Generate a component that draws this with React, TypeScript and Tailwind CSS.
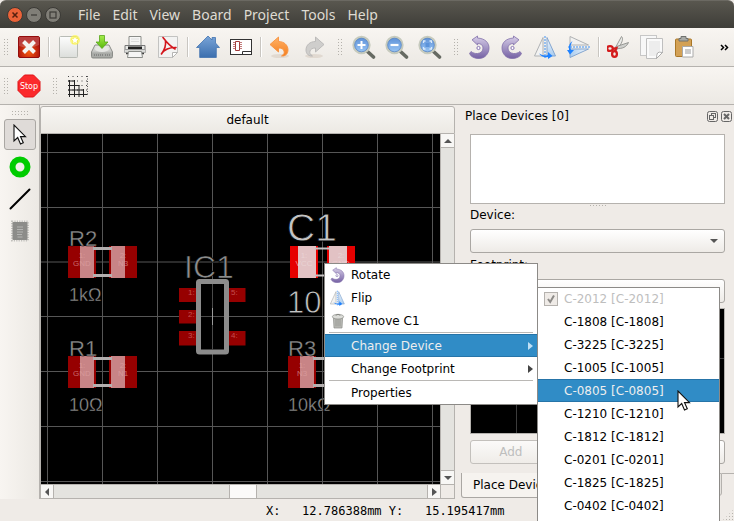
import type { ReactNode } from 'react';

const uiFont = "font-['DejaVu_Sans',sans-serif]";
const menus = ['File', 'Edit', 'View', 'Board', 'Project', 'Tools', 'Help'];
const devices = ['2012', '1808', '3225', '1005', '0805', '1210', '1812', '0201', '1825', '0402'];

function Svg({ children, size = 24 }: { children: ReactNode; size?: number }) {
  return (
    <svg width={size} height={size} viewBox="0 0 24 24" fill="none" aria-hidden="true" className="shrink-0">
      {children}
    </svg>
  );
}

function Gradients() {
  const list: [string, string, string][] = [
    ['gPaper', '#fdfdfd', '#dcdedb'],
    ['gBlue', '#7aa5d8', '#3c6fae'],
    ['gGreen', '#a5ee4c', '#58b80c'],
    ['gMetal', '#eeeeec', '#9a9c98'],
    ['gLens', '#5c8fd6', '#9cc8f6'],
    ['gPurple', '#d8cfe8', '#7561a4'],
    ['gOrange', '#ffb267', '#f57f1f'],
    ['gFlip', '#f2f7fc', '#a9ccef'],
  ];
  return (
    <svg width="0" height="0" className="absolute" aria-hidden="true">
      <defs>
        {list.map(([id, a, b]) => (
          <linearGradient key={id} id={id} x1="0" y1="0" x2="0" y2="1">
            <stop offset="0" stopColor={a} />
            <stop offset="1" stopColor={b} />
          </linearGradient>
        ))}
        <radialGradient id="gFire" cx="0.5" cy="0.75" r="0.6">
          <stop offset="0" stopColor="#f55a10" />
          <stop offset="1" stopColor="#a80d0d" />
        </radialGradient>
      </defs>
    </svg>
  );
}

const CloseBoard = () => (
  <Svg>
    <rect x="1.5" y="1.5" width="21" height="21" rx="1.5" fill="url(#gFire)" stroke="#930c0c" />
    <path d="M2 2h20v8Q12 15 2 11z" fill="#fff" opacity=".2" />
    <path d="M6.500 6.500l11 11m0-11l-11 11" stroke="#f4f4f2" strokeWidth="4" />
  </Svg>
);
const NewDoc = () => (
  <Svg>
    <rect x="2.500" y="1.500" width="18" height="21" rx="1" fill="url(#gPaper)" stroke="#b9bcb6" />
    <circle cx="18" cy="5" r="5" fill="#fff84a" opacity=".65" />
    <path d="M18 1l1.200 2.600 2.800.4-2 2 .5 2.800-2.500-1.300-2.500 1.300.5-2.800-2-2 2.800-.4z" fill="#fff" stroke="#f2ea35" strokeWidth=".6" />
  </Svg>
);
const Save = () => (
  <Svg>
    <path d="M5 10h14l3.500 7v4.500q0 1.500-1.500 1.500H3q-1.500 0-1.500-1.500V17z" fill="url(#gMetal)" stroke="#8a8c88" />
    <path d="M2 17.500h20V22H2z" fill="#a9aba7" />
    <ellipse cx="12" cy="14" rx="7" ry="3" fill="#e6e7e4" />
    <path d="M4 20h9M15 20h5" stroke="#666" strokeDasharray="1 1" />
    <path d="M9.500 .5h5V7h3.500l-6 6.500L6 7h3.500z" fill="url(#gGreen)" stroke="#57a51a" strokeWidth=".8" />
  </Svg>
);
const Print = () => (
  <Svg>
    <path d="M6 1.500h12V11H6z" fill="#f7f7f6" stroke="#8b8d89" />
    <path d="M2 10.500h20v4H2z" fill="#e7e8e5" stroke="#777" />
    <path d="M5 11.500h14v3H5z" fill="#222" />
    <path d="M1.500 14.500h21v3h-21z" fill="#d8d9d6" stroke="#999" strokeWidth=".7" />
    <path d="M3 18.500h18" stroke="#3b3b3b" strokeWidth="1.500" />
    <path d="M5.500 16.500h13l1 6h-15z" fill="#f5f5f4" stroke="#8b8d89" />
    <path d="M8 4h8M8 6.500h8" stroke="#ddd" />
  </Svg>
);
const Pdf = () => (
  <Svg>
    <path d="M2.500 1.500h19v16l-5 5h-14z" fill="#f3f3f2" stroke="#c3c3c1" />
    <path d="M21.500 17.500h-5v5z" fill="#fff" stroke="#b5b5b3" />
    <path d="M7 2.500c1.500 2 6 8 12 11.500M9.500 6c.5 4-1 9-4 13M5.500 18.500C9 14 14 12.300 20 12.500" stroke="#d3161c" strokeWidth="1.600" strokeLinecap="round" />
  </Svg>
);
const Home = () => (
  <Svg>
    <path d="M12 1l4 4V2.500h3.500V8l4 4.500h-3.200V22.500H3.700V12.500H.5z" fill="url(#gBlue)" stroke="#4374b0" strokeWidth=".8" strokeLinejoin="round" />
  </Svg>
);
const Schematic = () => (
  <Svg>
    <rect x="1.500" y="4.500" width="21" height="15" fill="#fff" stroke="#333" />
    <path d="M6.500 6.500h4v9h-4z" stroke="#a13a3a" />
    <path d="M4 7.500h2.500M4 9.500h2.500M4 11.500h2.500M4 13.500h2.500M10.500 7.500H13M10.500 9.500H13M10.500 11.500H13M10.500 13.500H13" stroke="#b35a5a" strokeWidth=".8" />
    <path d="M13.500 19.500v-3h9" stroke="#333" />
  </Svg>
);
const Undo = ({ redo = false }: { redo?: boolean }) => (
  <Svg>
    <g transform={redo ? 'matrix(-1 0 0 1 23 0)' : undefined}>
      <ellipse cx="11" cy="21" rx="9" ry="2" fill="#c9b7a6" opacity=".35" />
      <path d="M1 9.500L9.500 2v4.500C15 6.500 19 10 19 15c0 4-3 6.500-6.500 6 2.500-1.500 3-3 2.500-5-.5-1.800-2.500-3-5.500-3V17z" fill={redo ? '#cfcecc' : 'url(#gOrange)'} stroke={redo ? '#b8b7b5' : '#f79240'} strokeWidth=".9" />
    </g>
  </Svg>
);
const Zoom = ({ kind }: { kind: 'in' | 'out' | 'fit' }) => (
  <Svg>
    <path d="M15.500 16.500l6 5.500" stroke="#666a62" strokeWidth="3.600" strokeLinecap="round" />
    <circle cx="9.500" cy="10" r="8" fill="url(#gLens)" stroke="#c6cabd" strokeWidth="2.300" />
    <circle cx="9.500" cy="10" r="6.800" stroke="#4a7dc4" strokeWidth=".7" />
    {kind === 'in' && <path d="M5.500 10h8M9.500 6v8" stroke="#fff" strokeWidth="2" />}
    {kind === 'out' && <path d="M5.500 10h8" stroke="#fff" strokeWidth="2.200" />}
    {kind === 'fit' && <path d="M5.500 8V6h2M11.500 6h2v2M13.500 12v2h-2M7.500 14h-2v-2" stroke="#dcebfb" strokeWidth="1.300" />}
    {kind === 'fit' && <rect x="7.500" y="8" width="4" height="4" fill="#5c93da" />}
  </Svg>
);
const Rotate = ({ flip = false, size = 24 }: { flip?: boolean; size?: number }) => (
  <Svg size={size}>
    <g transform={flip ? 'matrix(-1 0 0 1 22 0)' : undefined}>
      <path d="M4 4.800L9.500 1v2c7.500.5 11.500 4.500 11.500 10S17 23.500 11 23.500C6.500 23.500 3 22 1.500 18.500L3 16.500c2 1.500 4 2.200 6.500 2 3.500-.3 5.500-2.500 5.500-5.500 0-2.800-2-4.500-5.500-4.500V10z" fill="url(#gPurple)" stroke="#8270aa" strokeWidth=".8" />
      <circle cx="10.500" cy="13" r="1.600" fill="#fff" stroke="#8774b3" />
    </g>
  </Svg>
);
const Flip = ({ vertical = false, size = 24 }: { vertical?: boolean; size?: number }) => (
  <Svg size={size}>
    <g transform={vertical ? 'matrix(0 1 -1 0 24 0)' : 'translate(-1 0)'}>
      <path d="M10 2.500V21H1.500z" fill="#f2f2f1" stroke="#b0b2b4" />
      <path d="M14 2.500V21h8.500z" fill="url(#gFlip)" stroke="#85a6cf" />
      <path d="M12 1v22" stroke="#3c91f5" strokeDasharray="2 1" />
      <path d="M6 18.500q5 3 9 1.500v-3l4.500 4-4.500 3v-2q-6 1-9-3.500z" fill="#1f82ff" />
    </g>
  </Svg>
);
const Cut = () => (
  <Svg>
    <g transform="translate(-1 0)">
      <path d="M15.500 1.500c2 2 1 5-2.500 11l-3 3-1-2z" fill="#e9eae7" stroke="#858783" strokeWidth=".8" />
      <path d="M22.500 7.500c-2 4.500-6 6.500-12.500 6l-1.500-.5 2-1.500z" fill="#cfd0cd" stroke="#858783" strokeWidth=".8" />
      <ellipse cx="4" cy="13.500" rx="2.800" ry="2.400" stroke="#d41c1c" strokeWidth="2.300" />
      <ellipse cx="8.500" cy="19" rx="2.400" ry="2.800" stroke="#d41c1c" strokeWidth="2.300" />
      <path d="M6.500 14l4-1-1.500 3.500" stroke="#d41c1c" strokeWidth="2" />
    </g>
  </Svg>
);
const Copy = () => (
  <Svg>
    <rect x=".5" y=".5" width="16" height="20" fill="#f8f8f8" stroke="#c7c7c7" />
    <path d="M6.500 3.500h16v14l-6 6h-10z" fill="#fafafa" stroke="#bfbfbf" />
    <path d="M9 6h11v10l-5 5H9z" fill="#ededed" />
    <path d="M22.500 17.500q-4-1-5 .5t-1 5.500z" fill="#fff" stroke="#9b9b9b" strokeWidth=".8" />
  </Svg>
);
const Paste = () => (
  <Svg>
    <rect x="2.500" y="4" width="16" height="17.500" rx="1" fill="#d3a155" stroke="#a97727" />
    <path d="M6 6V3.500h2V1.500h5v2h2V6z" fill="#a9aba7" stroke="#70726f" />
    <path d="M9.500 11.500h10.500V22H9.500z" fill="#fff" stroke="#aaa" />
    <path d="M12 14h6v5h-6z" fill="#ccc" />
  </Svg>
);
const Stop = () => (
  <Svg>
    <path d="M7.500 1h9L23 7.500v9L16.500 23h-9L1 16.500v-9z" fill="#fb2a2c" stroke="#e01216" />
    <text x="12" y="15" textAnchor="middle" fontSize="8" fill="#fff" fontFamily="DejaVu Sans, sans-serif">Stop</text>
  </Svg>
);
const Grid = () => (
  <Svg>
    <path d="M1 2.500h22M1 7h22M1 11.500h22M1 16h22M1 20.500h22" stroke="#444" strokeDasharray="1 3.500" />
    <path d="M2.500 6v17M7.500 6v17M12 11v12M16.500 15v8M1 7h6.500M1 11.500h11.500M1 16h16M1 20.500h19.500" stroke="#222" />
    <path d="M20.500 2v20" stroke="#555" strokeDasharray="1 1.500" />
  </Svg>
);
const Trash = () => (
  <Svg size={16}>
    <path d="M5 6h14l-1 16.500H6z" fill="#b9bab5" stroke="#8b8d88" />
    <path d="M9 9v11M12 9v11M15 9v11" stroke="#93958f" strokeWidth="1.200" />
    <ellipse cx="12" cy="5.500" rx="8.500" ry="3.500" fill="#dcddd9" stroke="#8b8d88" />
    <path d="M8.500 3.500q3.500-3 7 0" stroke="#858782" strokeWidth="1.500" />
  </Svg>
);
const Chip = () => (
  <Svg>
    <rect x="4" y="2.500" width="16" height="19" stroke="#c2c1bd" strokeWidth="2" strokeDasharray="1.200 1.200" />
    <rect x="4.500" y="3" width="15" height="18" rx="1" fill="#8c8c89" />
    <path d="M9 8h6M9 10.500h6M9 13h6M9 15.500h5M9.500 18h5" stroke="#bfbfbc" strokeWidth=".8" />
  </Svg>
);
const Pointer = ({ className = '' }: { className?: string }) => (
  <svg width="14" height="22" viewBox="0 0 14 22" className={className} aria-hidden="true">
    <path d="M1 1v16l3.700-3.500L7.500 20l2.800-1.200L7.500 12.600h5z" fill="#fff" stroke="#111" strokeWidth="1.100" />
  </svg>
);

function Tool({ label, children }: { label: string; children: ReactNode }) {
  return (
    <button type="button" aria-label={label} title={label} className="flex h-8 w-[33px] shrink-0 items-center justify-center">
      {children}
    </button>
  );
}
const Separator = () => (
  <div className="flex w-[7px] shrink-0 justify-center">
    <div className="h-5 w-0.5 border-l border-[#c9c6c1] bg-white" />
  </div>
);
const dots = 'bg-[radial-gradient(circle,#b5b2ac_1px,transparent_1px)] bg-[size:3px_3px]';
const Handle = ({ first = false }: { first?: boolean }) => (
  <div className={`flex shrink-0 justify-end ${first ? 'w-3 pr-[3px]' : 'w-[17px] pr-1'}`}>
    <div className={`h-[18px] w-1.5 ${dots}`} />
  </div>
);

function Arrow({ dir, className = 'fill-[#555]' }: { dir: 'up' | 'down' | 'left' | 'right'; className?: string }) {
  const d = { up: 'M0 6h8L4 2z', down: 'M0 2h8L4 6z', left: 'M6 0v8L2 4z', right: 'M2 0v8l5-4z' }[dir];
  return (
    <svg width="8" height="8" viewBox="0 0 8 8" className={className} aria-hidden="true">
      <path d={d} />
    </svg>
  );
}

function Part({ x, y, net1, net2, bright = false }: { x: number; y: number; net1: string; net2: string; bright?: boolean }) {
  const pad = bright ? '#e60000' : '#960000';
  const light = bright ? '#e2c2c4' : '#c88486';
  const w = bright ? 65 : 69;
  const inset = bright ? 8 : 12;
  const ink = bright ? '#eedcdc' : '#e0a4a5';
  return (
    <g transform={`translate(${x} ${y})`} fontSize="8" textAnchor="middle">
      <path d={`M0 0h28v32H0zM${w - 28} 0h28v32h-28z`} fill={pad} />
      <path d={`M${inset} 0h${26 - inset}v32h-${26 - inset}zM${w - 26} 0h${26 - inset}v32h-${26 - inset}z`} fill={light} />
      <path d={`M25 2.500h${w - 50}M25 29.500h${w - 50}`} stroke={bright ? '#c8c4c4' : '#b4b0b0'} strokeWidth={bright ? 2 : 3} />
      <path d={`M${w / 2} 8v16`} stroke="#555" strokeWidth="1" />
      <g fill={ink} opacity=".65">
        <text x="14" y="12">1:</text>
        <text x="14" y="20">{net1}</text>
        <text x={w - 14} y="12">2:</text>
        <text x={w - 14} y="20">{net2}</text>
      </g>
    </g>
  );
}

function BoardView() {
  const xs = [47.5, 102.5, 157.5, 212.5, 267.5, 322.5, 377.5, 432.5];
  const ys = [152.5, 207.5, 262, 316.5, 371.5, 426.5, 481.5];
  return (
    <svg viewBox="41 134 399 350" preserveAspectRatio="xMinYMin slice" className="h-full min-w-0 flex-1 bg-black font-['Liberation_Sans',Arial,sans-serif]" role="img" aria-label="Board layout">
      {xs.map((x) => <path key={x} d={`M${x} 134V484`} stroke="#565656" />)}
      {ys.map((y) => <path key={y} d={`M41 ${y}H440`} stroke="#565656" />)}
      <Part x={68} y={246} net1="GND" net2="N3" />
      <Part x={68} y={356} net1="GND" net2="N1" />
      <Part x={288} y={356} net1="N3" net2="" />
      <Part x={290} y={246} net1="VCC" net2="GND" bright />
      <path d="M179 288h23v14h-23zM223 288h22.500v14H223zM179 310h23v13.500h-23zM179 331h23v14.500h-23zM223 331h22.500v14.500H223z" fill="#960000" />
      <rect x="198.500" y="281.500" width="28" height="70.500" fill="#000" stroke="#8c8c8c" strokeWidth="5" rx="1" />
      <path d="M212.500 284v65.500M201 316.500h23" stroke="#4a4a4a" />
      <path d="M212.500 308v17" stroke="#999" />
      <g fontSize="8" fill="#d06060" opacity=".8">
        <text x="188" y="295">1:</text>
        <text x="188" y="317">2:</text>
        <text x="188" y="338">3:</text>
        <text x="231" y="295">5:</text>
        <text x="231" y="338">4:</text>
      </g>
      <g fill="#8c8c8c" stroke="#000" strokeWidth=".3">
        <text x="69" y="246" fontSize="22">R2</text>
        <text x="69" y="301" fontSize="18">1kΩ</text>
        <text x="69" y="356" fontSize="22">R1</text>
        <text x="69" y="411" fontSize="18">10Ω</text>
        <text x="184" y="278" fontSize="32" strokeWidth=".7">IC1</text>
        <text x="288" y="356" fontSize="22">R3</text>
        <text x="288" y="411" fontSize="18">10kΩ</text>
      </g>
      <g fill="#c4c4c4" stroke="#000" strokeWidth=".8">
        <text x="287" y="241" fontSize="39">C1</text>
        <text x="287" y="313" fontSize="31">10</text>
      </g>
    </svg>
  );
}

function SelectBox({ id, label }: { id: string; label: string }) {
  return (
    <div className="flex flex-col">
      <label htmlFor={id} className="flex h-[22px] items-center">{label}</label>
      <div className="mt-[3px] grid items-center">
        <select id={id} className="col-start-1 row-start-1 h-6 w-full appearance-none rounded-[3px] border border-[#aaa7a3] bg-linear-to-b from-white to-[#eeebe7]" />
        <span className="pointer-events-none col-start-1 row-start-1 justify-self-end pr-[7px]"><Arrow dir="down" /></span>
      </div>
    </div>
  );
}

function PlaceDevices() {
  return (
    <aside className="flex w-[279px] shrink-0 flex-col overflow-hidden pl-1.5">
      <header className="flex h-[22px] shrink-0 items-center gap-[3px] pr-0.5 pl-1">
        <h2 className="flex-1">Place Devices [0]</h2>
        <button type="button" aria-label="Float panel">
          <svg width="11" height="11" viewBox="0 0 11 11" fill="none" stroke="#666" aria-hidden="true">
            <rect x=".5" y=".5" width="10" height="10" rx="2" />
            <rect x="4.500" y="2.500" width="4" height="4" />
            <rect x="2.500" y="4.500" width="4" height="4" fill="#efebe7" />
          </svg>
        </button>
        <button type="button" aria-label="Close panel">
          <svg width="11" height="11" viewBox="0 0 11 11" fill="none" stroke="#666" aria-hidden="true">
            <rect x=".5" y=".5" width="10" height="10" rx="2" />
            <path d="M3 3l5 5m0-5L3 8" strokeWidth="2" />
          </svg>
        </button>
      </header>
      <div className="flex min-h-0 flex-1 flex-col pt-[7px] pr-[9px] pl-[9px]">
        <div role="listbox" aria-label="Devices to place" className="h-[70px] shrink-0 border border-[#b5b2ae] bg-white" />
        <div className={`h-[3px] w-[18px] self-center ${dots}`} />
        <div className="-mt-[3px] flex flex-col gap-px">
          <SelectBox id="device" label="Device:" />
          <SelectBox id="footprint" label="Footprint:" />
        </div>
        <svg className="mt-[5px] min-h-0 w-full flex-1 border border-[#b5b2ae] bg-black" role="img" aria-label="Footprint preview">
          <path d="M45.500 0V130M100.500 0V130M155.500 0V130M210.500 0V130M0 49.500H260" stroke="#3c3c3c" />
        </svg>
        <div className="mt-1.5 mb-[9px] flex shrink-0 gap-1.5">
          <button type="button" disabled className="h-6 flex-1 rounded-[3px] border border-[#c3c0bc] bg-linear-to-b from-[#fbfaf9] to-[#efece8] pr-1.5 text-[#bebebe]">Add</button>
          <span className="flex h-6 flex-2 rounded-[3px] border border-[#aaa7a3] bg-linear-to-b from-white to-[#eeebe7]" />
        </div>
      </div>
      <div role="tablist" className="flex h-[26px] shrink-0 items-start">
        <button type="button" role="tab" aria-selected="true" className="h-[25px] shrink-0 rounded-b-[3px] border border-t-0 border-[#aaa7a3] bg-[#f6f3ef] px-[11px]">Place Devices</button>
        <span className="h-[23px] flex-1 rounded-b-[3px] border border-[#b5b2ae] bg-[#e6e3df]" />
        <span className="w-3 shrink-0 border-t border-[#b5b2ae]" />
      </div>
    </aside>
  );
}

function MenuItem({ label, icon, submenu = false, active = false, edge = false }: { label: string; icon?: ReactNode; submenu?: boolean; active?: boolean; edge?: boolean }) {
  return (
    <li role="none">
      <button
        type="button"
        role="menuitem"
        className={`flex w-full items-center pr-[3px] pl-[5px] text-left ${edge ? 'h-[22px]' : 'h-[23px]'} ${active ? 'border-y border-[#2674a8] bg-[#308cc6] text-[#eee]' : ''}`}
      >
        <span className="w-[21px]">{icon}</span>
        <span className="flex-1">{label}</span>
        {submenu && <Arrow dir="right" className={active ? 'fill-[#bfe0f5]' : 'fill-[#444]'} />}
      </button>
    </li>
  );
}

const MenuLine = () => <li role="separator" className="mx-1 h-0.5 border-t border-[#bab8b5]" />;

export default function App() {
  return (
    <div className={`relative flex h-screen w-full flex-col overflow-hidden bg-[#efebe7] text-xs text-black ${uiFont}`}>
      <Gradients />
      <header className="flex h-7 shrink-0 items-center gap-[13px] rounded-t-md border-t border-[#6b6962] bg-linear-to-b from-[#59574f] to-[#3e3d38] pl-[7px]">
        <div className="flex gap-[3px]">
          <button type="button" aria-label="Close" className="rounded-full border border-[#3a3935] bg-[#eb6238]">
            <svg width="14" height="14" viewBox="0 0 14 14" stroke="#57200f" strokeWidth="1.500" aria-hidden="true"><path d="M4.500 4.500l5 5m0-5l-5 5" /></svg>
          </button>
          <button type="button" aria-label="Minimize" className="rounded-full border border-[#3a3935] bg-[#807e77]">
            <svg width="14" height="14" viewBox="0 0 14 14" stroke="#3b3a36" strokeWidth="1.200" aria-hidden="true"><path d="M4 7h6" /></svg>
          </button>
          <button type="button" aria-label="Maximize" className="rounded-full border border-[#3a3935] bg-[#807e77]">
            <svg width="14" height="14" viewBox="0 0 14 14" fill="none" stroke="#3b3a36" strokeWidth="1.200" aria-hidden="true"><rect x="4" y="4" width="6" height="6" /></svg>
          </button>
        </div>
        <nav className="flex gap-3 pl-1 font-['Noto_Sans',sans-serif] text-sm text-[#dfdbd2]">
          {menus.map((m) => <button key={m} type="button">{m}</button>)}
        </nav>
      </header>

      <div role="toolbar" aria-label="Main tools" className="flex h-[39px] shrink-0 items-center border-b border-[#b5b2ae] bg-linear-to-b from-[#f8f5f1] to-[#ece9e4]">
        <Handle first />
        <Tool label="Close board"><CloseBoard /></Tool>
        <Separator />
        <Tool label="New"><NewDoc /></Tool>
        <Tool label="Save"><Save /></Tool>
        <Tool label="Print"><Print /></Tool>
        <Tool label="Export PDF"><Pdf /></Tool>
        <Separator />
        <Tool label="Control panel"><Home /></Tool>
        <Tool label="Schematic"><Schematic /></Tool>
        <Separator />
        <Tool label="Undo"><Undo /></Tool>
        <Tool label="Redo"><Undo redo /></Tool>
        <Handle />
        <Tool label="Zoom in"><Zoom kind="in" /></Tool>
        <Tool label="Zoom out"><Zoom kind="out" /></Tool>
        <Tool label="Zoom all"><Zoom kind="fit" /></Tool>
        <Handle />
        <Tool label="Rotate left"><Rotate /></Tool>
        <Tool label="Rotate right"><Rotate flip /></Tool>
        <Tool label="Flip horizontal"><Flip /></Tool>
        <Tool label="Flip vertical"><Flip vertical /></Tool>
        <Separator />
        <Tool label="Cut"><Cut /></Tool>
        <Tool label="Copy"><Copy /></Tool>
        <Tool label="Paste"><Paste /></Tool>
        <button type="button" aria-label="More tools" className="mr-[5px] ml-auto">
          <svg width="9" height="7" viewBox="0 0 9 7" fill="none" stroke="#000" strokeWidth="1.500" aria-hidden="true"><path d="M1 1l2.500 2.500L1 6M5 1l2.500 2.500L5 6" /></svg>
        </button>
      </div>

      <div role="toolbar" aria-label="Board tools" className="flex h-[38px] shrink-0 items-center border-b border-[#b5b2ae] bg-linear-to-b from-[#f8f5f1] to-[#ece9e4]">
        <Handle first />
        <Tool label="Stop command"><Stop /></Tool>
        <Handle />
        <Tool label="Grid properties"><Grid /></Tool>
      </div>

      <main className="flex min-h-0 flex-1">
        <div role="toolbar" aria-label="Drawing tools" className="flex w-10 shrink-0 flex-col items-center gap-px border-r border-[#b5b2ae] bg-linear-to-r from-[#f8f5f1] to-[#ece9e4] pt-[5px]">
          <div className={`mb-0.5 h-1.5 w-[18px] ${dots}`} />
          <button type="button" aria-label="Select" className="flex h-[31px] w-8 items-center justify-center rounded-[3px] border border-[#aaa7a3] bg-[#dfdbd8]"><Pointer /></button>
          <button type="button" aria-label="Add via" className="flex h-[31px] items-center">
            <Svg><circle cx="12" cy="12" r="7.500" stroke="#00cc00" strokeWidth="6" /></Svg>
          </button>
          <button type="button" aria-label="Draw line" className="flex h-[31px] items-center">
            <Svg><path d="M2.500 21.500l19-19" stroke="#000" strokeWidth="2" strokeLinecap="round" /></Svg>
          </button>
          <button type="button" aria-label="Add device" className="flex h-[31px] items-center"><Chip /></button>
        </div>

        <section className="flex min-w-0 flex-1 flex-col pt-px">
          <button type="button" className="h-[28px] shrink-0 rounded-t-[3px] border border-[#b5b2ae] bg-linear-to-b from-[#f8f6f3] to-[#ece9e4]">default</button>
          <div className="flex min-h-0 flex-1 border-l border-[#b5b2ae]">
            <div className="flex min-w-0 flex-1"><BoardView /></div>
            <div className="flex w-[15px] shrink-0 flex-col border-x border-[#b5b2ae] bg-[#e4e3df]">
              <button type="button" aria-label="Scroll up" className="flex h-3.5 items-center justify-center border-b border-[#b5b2ae] bg-[#f8f7f5]"><Arrow dir="up" /></button>
              <div className="flex-1" />
              <button type="button" aria-label="Scroll down" className="flex h-3.5 items-center justify-center border-t border-[#b5b2ae] bg-[#f8f7f5]"><Arrow dir="down" /></button>
            </div>
          </div>
          <div className="flex h-[15px] shrink-0 border border-[#b5b2ae] bg-[#e4e3df]">
            <button type="button" aria-label="Scroll left" className="flex w-[13px] items-center justify-center border-r border-[#b5b2ae] bg-[#f8f7f5]"><Arrow dir="left" /></button>
            <div className="flex flex-1 pl-[3px]">
              <div className="flex-[172]" />
              <div className="w-7 border-x border-[#b5b2ae] bg-[#fbfaf9]" />
              <div className="flex-[170]" />
            </div>
            <button type="button" aria-label="Scroll right" className="flex w-3.5 items-center justify-center border-x border-[#b5b2ae] bg-[#f8f7f5]"><Arrow dir="right" /></button>
            <div className="w-[13px] bg-[#efebe7]" />
          </div>
        </section>

        <PlaceDevices />
      </main>

      <footer className="flex h-[22px] shrink-0 items-center pt-px pl-[266px] font-['DejaVu_Sans_Mono',monospace] whitespace-pre">
        <span className="flex-1">{'X:   12.786388mm Y:   15.195417mm'}</span>
        <span className={`size-3 self-end ${dots} [clip-path:polygon(100%_0,100%_100%,0_100%)]`} />
      </footer>

      <ul role="menu" className="absolute top-[263px] left-[324px] w-[214px] border border-[#8c8a87] bg-white">
        <MenuItem label="Rotate" icon={<Rotate size={16} />} edge />
        <MenuItem label="Flip" icon={<Flip size={16} />} />
        <MenuItem label="Remove C1" icon={<Trash />} />
        <MenuLine />
        <MenuItem label="Change Device" submenu active />
        <MenuItem label="Change Footprint" submenu />
        <MenuLine />
        <MenuItem label="Properties" edge />
      </ul>

      <ul role="menu" aria-label="Change Device" className="absolute top-[287px] left-[537px] w-[183px] border border-[#8c8a87] bg-white pb-2">
        {devices.map((d, i) => (
          <li key={d} role="none" className={`flex items-center gap-1.5 pl-1.5 ${i === 0 ? 'h-[22px] text-[#bebebe]' : 'h-[23px]'} ${d === '0805' ? 'border-y border-[#2674a8] bg-[#308cc6] text-[#eee]' : ''}`}>
            {i === 0 ? (
              <label className="flex items-center gap-1.5">
                <span className="grid">
                  <input type="checkbox" checked disabled readOnly className="col-start-1 row-start-1 size-3.5 appearance-none border border-[#b5b2ae] bg-[#efebe7]" />
                  <svg viewBox="0 0 14 14" className="col-start-1 row-start-1 size-3.5" fill="none" stroke="#8d8b88" strokeWidth="2" aria-hidden="true"><path d="M4 7l2.200 3L10 3.500" /></svg>
                </span>
                C-{d} [C-{d}]
              </label>
            ) : (
              <button type="button" role="menuitem" className="h-full flex-1 pl-5 text-left">C-{d} [C-{d}]</button>
            )}
          </li>
        ))}
      </ul>
      <Pointer className="absolute top-[390px] left-[677px]" />
    </div>
  );
}
